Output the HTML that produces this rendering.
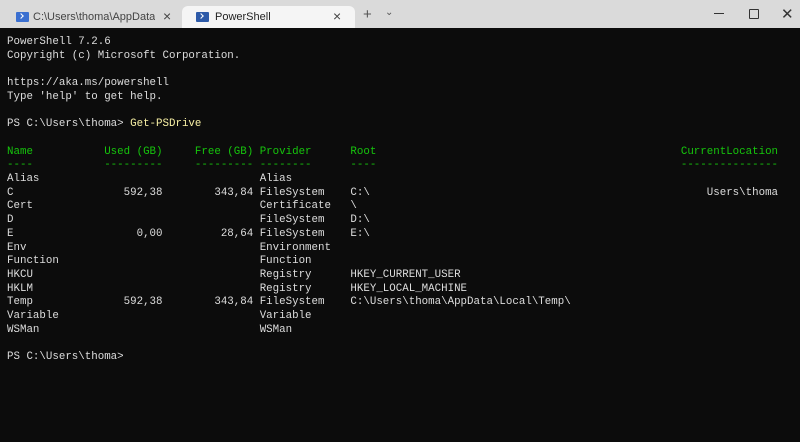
<!DOCTYPE html>
<html><head><style>
html,body{margin:0;padding:0;width:800px;height:442px;overflow:hidden;background:#0c0c0c}
#bar{position:absolute;left:0;top:0;width:800px;height:28px;background:#dadada;font-family:"Liberation Sans",sans-serif;font-size:11px;color:#222}
.tab{position:absolute;top:6px;height:22px}
#t1{left:8px;width:172px}
#t2{left:182px;width:173px;background:#f5f5f5;border-radius:6px 6px 0 0}
.ic{position:absolute;left:14px;top:6px;width:13px;height:10px;background:#2d5aa8;border-radius:1px}
#t1 .ic{left:8px;background:#3a6fd0}
.ic:after{content:"";position:absolute;left:3px;top:2px;width:3px;height:3px;border-right:1.5px solid #fff;border-bottom:1.5px solid #fff;transform:rotate(-45deg)}
.lbl{position:absolute;left:33px;top:5px;white-space:nowrap}
#t1 .lbl{left:25px;color:#444;width:122px;overflow:hidden}
.x{position:absolute;top:2px;font-size:14px;color:#444}
#term{position:absolute;left:7px;top:36px;margin:0;font-family:"Liberation Mono",monospace;font-size:10.8px;line-height:13.7px;color:#dddddd;white-space:pre}
.g{color:#16c60c}.y{color:#f9f1a5}
</style></head><body>
<div id="bar">
<div class="tab" id="t1"><div class="ic"></div><div class="lbl">C:\Users\thoma\AppData\Roaming</div><div class="x" style="left:155px">×</div></div>
<div class="tab" id="t2"><div class="ic"></div><div class="lbl">PowerShell</div><div class="x" style="left:151px">×</div></div>
<div style="position:absolute;left:363px;top:6px;font-size:15px;color:#555">+</div>
<div style="position:absolute;left:385px;top:7px;font-size:10px;color:#555">⌄</div>
<div style="position:absolute;left:714px;top:13px;width:10px;height:1px;background:#333"></div>
<div style="position:absolute;left:749px;top:9px;width:8px;height:8px;border:1px solid #333;border-radius:1px"></div>
<div style="position:absolute;left:781px;top:5px;font-size:15px;color:#333">✕</div>
</div>
<pre id="term">PowerShell 7.2.6
Copyright (c) Microsoft Corporation.

https://aka.ms/powershell
Type 'help' to get help.

PS C:\Users\thoma&gt; <span class="y">Get-PSDrive</span>

<span class="g">Name           Used (GB)     Free (GB) Provider      Root                                               CurrentLocation
----           ---------     --------- --------      ----                                               ---------------</span>
Alias                                  Alias
C                 592,38        343,84 FileSystem    C:\                                                    Users\thoma
Cert                                   Certificate   \
D                                      FileSystem    D:\
E                   0,00         28,64 FileSystem    E:\
Env                                    Environment
Function                               Function
HKCU                                   Registry      HKEY_CURRENT_USER
HKLM                                   Registry      HKEY_LOCAL_MACHINE
Temp              592,38        343,84 FileSystem    C:\Users\thoma\AppData\Local\Temp\
Variable                               Variable
WSMan                                  WSMan

PS C:\Users\thoma&gt;</pre>
</body></html>
